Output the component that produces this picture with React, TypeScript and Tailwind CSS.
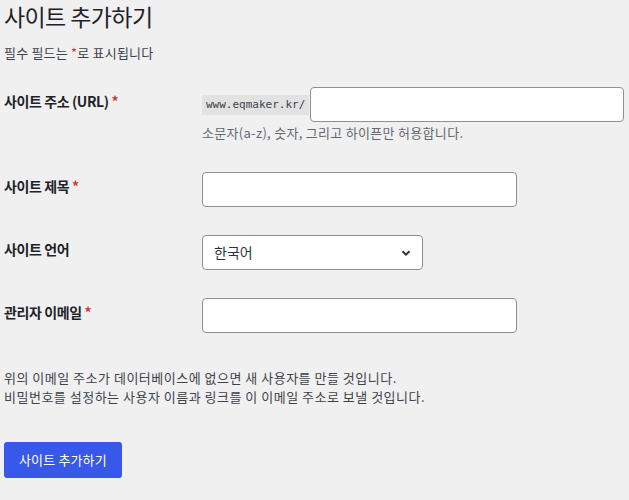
const font = { fontFamily: '"Noto Sans CJK KR", "Noto Sans", sans-serif' };

function Req() {
  return <span className="text-[#d63638]"> *</span>;
}

function Row({ label, req, children, top }: { label: string; req?: boolean; children: React.ReactNode; top: string }) {
  return (
    <div className={`flex ${top}`}>
      <div className="w-[198px] shrink-0 pt-[1px] text-[14px] font-bold leading-[26px] tracking-[-0.4px] text-[#1d2327]">
        {label}
        {req && <Req />}
      </div>
      <div className="flex-1">{children}</div>
    </div>
  );
}

const inputCls =
  "h-[35px] rounded-[4px] border border-[#8c8f94] bg-white px-2 text-[14px] text-[#2c3338] outline-none";

export default function App() {
  return (
    <div className="min-h-screen bg-[#f0f0f1] pl-[4px] text-[#3c434a]" style={font}>
      <h1 className="pt-[1px] text-[23px] font-normal leading-[30px] tracking-[-0.6px] text-[#1d2327]">
        사이트 추가하기
      </h1>
      <p className="mt-[12px] text-[13px] leading-[20px] tracking-[0.2px]">
        필수 필드는 <span className="text-[#d63638]">*</span>로 표시됩니다
      </p>

      <form>
        <Row label="사이트 주소 (URL)" req top="mt-[24px]">
          <div className="flex items-center">
            <code
              className="bg-[#e2e2e2] px-[4px] py-[1px] text-[11px] leading-[18px] tracking-normal text-[#3c434a]"
              style={{ fontFamily: '"DejaVu Sans Mono", monospace' }}
            >
              www.eqmaker.kr/
            </code>
            <input className={`${inputCls} ml-[1px] w-[314px]`} />
          </div>
          <p className="mt-[1px] text-[13px] leading-[20px] tracking-[0.3px] text-[#646970]">
            소문자(a-z), 숫자, 그리고 하이픈만 허용합니다.
          </p>
        </Row>

        <Row label="사이트 제목" req top="mt-[29px]">
          <input className={`${inputCls} w-[315px]`} />
        </Row>

        <Row label="사이트 언어" top="mt-[28px]">
          <div className={`${inputCls} flex w-[221px] items-center justify-between pl-[11px] pr-[10px]`}>
            <span>한국어</span>
            <svg width="12" height="12" viewBox="0 0 12 12">
              <path d="M2.5 4.2 6 7.6 9.5 4.2" fill="none" stroke="#2c3338" strokeWidth="2" />
            </svg>
          </div>
        </Row>

        <Row label="관리자 이메일" req top="mt-[28px]">
          <input className={`${inputCls} w-[315px]`} />
        </Row>

        <p className="mt-[35px] text-[13px] leading-[19px] tracking-[0.5px] text-[#3c434a]">
          위의 이메일 주소가 데이터베이스에 없으면 새 사용자를 만들 것입니다.
          <br />
          비밀번호를 설정하는 사용자 이름과 링크를 이 이메일 주소로 보낼 것입니다.
        </p>

        <button
          type="button"
          className="mt-[36px] h-[36px] rounded-[3px] bg-[#3858e9] px-[15px] text-[13px] tracking-[0.15px] text-white"
        >
          사이트 추가하기
        </button>
      </form>
    </div>
  );
}
